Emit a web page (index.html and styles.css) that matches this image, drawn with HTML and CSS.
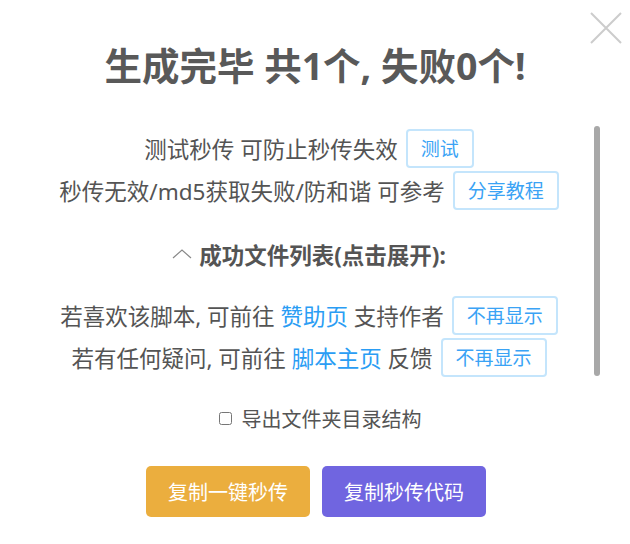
FILE: index.html
```html
<!DOCTYPE html>
<html lang="zh-CN">
<head>
  <meta charset="UTF-8">
  <meta name="viewport" content="width=device-width, initial-scale=1.0">
  <title>生成完毕</title>
  <link rel="stylesheet" href="styles.css">
</head>
<body>
  <div class="swal-popup">
    <button class="swal-close" aria-label="关闭">
      <svg width="32" height="32" viewBox="0 0 32 32"><path d="M1 1 L31 31 M31 1 L1 31" stroke="#cccccc" stroke-width="2" fill="none"/></svg>
    </button>
    <h2 class="swal-title">生成完毕 共1个, 失败0个!</h2>
    <div class="result-body">
      <div class="tip-row">
        <span>测试秒传 可防止秒传失效</span>
        <button class="tip-btn">测试</button>
      </div>
      <div class="tip-row">
        <span>秒传无效/md5获取失败/防和谐 可参考</span>
        <button class="tip-btn">分享教程</button>
      </div>
      <div class="file-toggle">
        <svg width="20" height="10" viewBox="0 0 20 10"><path d="M1 9 L10 1 L19 9" stroke="#888888" stroke-width="1.2" fill="none"/></svg>
        <b>成功文件列表(点击展开):</b>
      </div>
      <div class="tip-row tip-row-gap">
        <span>若喜欢该脚本, 可前往 <a class="tip-link" href="#">赞助页</a> 支持作者</span>
        <button class="tip-btn">不再显示</button>
      </div>
      <div class="tip-row">
        <span>若有任何疑问, 可前往 <a class="tip-link" href="#">脚本主页</a> 反馈</span>
        <button class="tip-btn">不再显示</button>
      </div>
      <div class="scroll-thumb"></div>
    </div>
    <label class="export-check">
      <input type="checkbox">
      <span>导出文件夹目录结构</span>
    </label>
    <div class="actions">
      <button class="btn btn-copy-link">复制一键秒传</button>
      <button class="btn btn-copy-code">复制秒传代码</button>
    </div>
  </div>
</body>
</html>
```

FILE: styles.css
```css
body {
  margin: 0;
  background: #fff;
  font-family: "Noto Sans", "Noto Sans CJK SC", sans-serif;
  color: #545454;
}
.swal-popup {
  position: relative;
  width: 630px;
  height: 544px;
  box-sizing: border-box;
  padding-top: 44px;
}
.swal-close {
  position: absolute;
  top: 12px;
  right: 8px;
  width: 32px;
  height: 32px;
  padding: 0;
  border: none;
  background: none;
  cursor: pointer;
}
.swal-close svg {
  display: block;
}
.swal-title {
  margin: 0;
  font-size: 37.5px;
  line-height: 43px;
  font-weight: 700;
  color: #595959;
  text-align: center;
}
.result-body {
  position: relative;
  margin: 39px 29px 0 26px;
  padding: 1px 9px 0 0;
  font-size: 22.5px;
}
.scroll-thumb {
  position: absolute;
  top: 0;
  right: 1px;
  width: 6px;
  height: 250px;
  border-radius: 3px;
  background: #a8a8a8;
}
.tip-row {
  display: flex;
  align-items: center;
  justify-content: center;
  height: 42px;
  white-space: nowrap;
}
.tip-row-gap {
  margin-top: 19px;
}
.tip-link {
  color: #2a9df4;
  text-decoration: none;
}
.tip-btn {
  margin-left: 8px;
  height: 39px;
  padding: 0 13px;
  border: 2px solid #c4e5fc;
  border-radius: 4px;
  background: #fff;
  color: #3aa3f5;
  font-family: inherit;
  font-size: 19px;
  cursor: pointer;
}
.file-toggle {
  display: flex;
  align-items: center;
  justify-content: center;
  gap: 7px;
  height: 42px;
  margin-top: 22px;
  cursor: pointer;
}
.file-toggle svg {
  display: block;
}
.export-check {
  display: flex;
  align-items: center;
  justify-content: center;
  height: 26px;
  margin-top: 27px;
  padding-left: 10px;
  font-size: 20px;
}
.export-check input {
  margin: 0 10px 0 0;
  width: 13px;
  height: 13px;
}
.actions {
  display: flex;
  justify-content: center;
  gap: 12px;
  margin-top: 35px;
  padding-left: 2px;
}
.btn {
  width: 164px;
  height: 51px;
  border: none;
  border-radius: 5px;
  color: #fff;
  font-family: inherit;
  font-size: 20px;
  cursor: pointer;
}
.btn-copy-link {
  background: #ebae3e;
}
.btn-copy-code {
  background: #7065e0;
}
```
